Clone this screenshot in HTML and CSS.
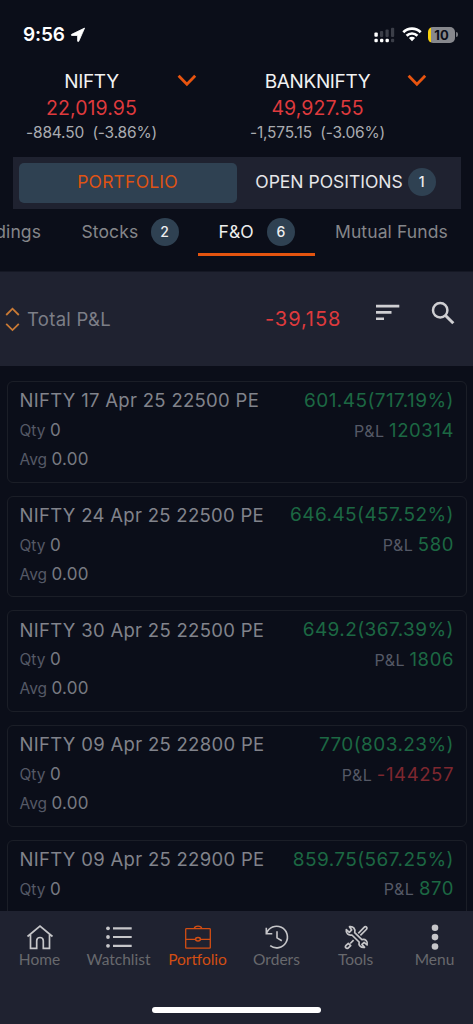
FILE: index.html
```html
<!DOCTYPE html>
<html lang="en">
<head>
<meta charset="utf-8">
<title>Portfolio</title>
<link rel="stylesheet" href="styles.css">
</head>
<body>
<div class="app">
  <header class="status">
    <div class="clock"><span>9:56</span>
      <svg width="16" height="16" viewBox="0 0 16 16"><path d="M14.6 1.1 8.8 14.2c-.3.6-1.2.5-1.2-.2V8.5H1.900c-.8 0-.9-.9-.2-1.200z" fill="#fff" stroke="#fff" stroke-width=".8" stroke-linejoin="round"/></svg>
    </div>
    <div class="signals">
      <svg width="21" height="16" viewBox="0 0 21 16">
        <g fill="#3b3e48"><rect x="6" y="4" width="3.200" height="6" rx="1"/><rect x="11.500" y="2.500" width="3.200" height="7.500" rx="1"/><rect x="17" y=".8" width="3.200" height="9.200" rx="1"/><rect x="17" y="11.700" width="3.200" height="3.600" rx="1"/></g>
        <g fill="#fff"><rect x=".4" y="5.400" width="3.400" height="4.400" rx="1"/><rect x=".4" y="11.700" width="3.400" height="3.600" rx="1.200"/><rect x="6" y="11.700" width="3.400" height="3.600" rx="1.200"/><rect x="11.500" y="11.700" width="3.400" height="3.600" rx="1.200"/></g>
      </svg>
      <svg class="wifi" width="20" height="15" viewBox="0 0 20 15" fill="none" stroke="#fff" stroke-width="2.700"><path d="M1.300 5.200a12.500 12.500 0 0 1 17.400 0"/><path d="M4.600 8.700a7.700 7.700 0 0 1 10.800 0"/><path d="M10 14.300 6.900 11.100a4.400 4.400 0 0 1 6.200 0z" fill="#fff" stroke="none"/></svg>
      <div class="battery">10</div><i class="battery-cap"></i>
    </div>
  </header>

  <section class="indices">
    <div class="index nifty">
      <b class="name">NIFTY</b><b class="price">22,019.95</b><span class="change">-884.50&nbsp; (-3.86%)</span>
    </div>
    <svg class="chevron" width="20" height="13" viewBox="0 0 20 13"><path d="m1.600 1.800 8.300 8.400 8.300-8.400" fill="none" stroke="#e8540f" stroke-width="2.800"/></svg>
    <div class="index bank">
      <b class="name">BANKNIFTY</b><b class="price">49,927.55</b><span class="change">-1,575.15&nbsp; (-3.06%)</span>
    </div>
    <svg class="chevron second" width="20" height="13" viewBox="0 0 20 13"><path d="m1.600 1.800 8.300 8.400 8.300-8.400" fill="none" stroke="#e8540f" stroke-width="2.800"/></svg>
  </section>

  <div class="switcher">
    <div class="segment active"><span>PORTFOLIO</span></div>
    <div class="segment"><span>OPEN POSITIONS</span><em class="badge">1</em></div>
  </div>

  <nav class="tabs">
    <div class="tab holdings"><span>dings</span></div>
    <div class="tab stocks"><span>Stocks</span><em class="badge">2</em></div>
    <div class="tab fno"><span>F&amp;O</span><em class="badge">6</em></div>
    <div class="tab funds"><span>Mutual Funds</span></div>
  </nav>

  <section class="summary">
    <svg class="sort" width="15" height="25" viewBox="0 0 15 25" fill="none" stroke="#c97a35" stroke-width="1.800"><path d="m1.200 8 6.300-6.300L13.800 8M1.200 16.800l6.300 6.300 6.300-6.300"/></svg>
    <span class="total-label">Total P&amp;L</span>
    <span class="total">-39,158</span>
    <svg class="filter" width="24" height="17" viewBox="0 0 24 17" fill="#cfcfd2"><path d="M0 .7h23.300v2.700H0zM0 7h15.500v2.700H0zM0 13.400h8v2.700H0z"/></svg>
    <svg class="search" width="24" height="24" viewBox="0 0 24 24" fill="none" stroke="#cfcfd2"><circle cx="9.200" cy="9.200" r="7.200" stroke-width="2.500"/><path d="m14 14 8.300 8.300" stroke-width="3"/></svg>
  </section>

  <main class="list">
    <article class="card">
      <div class="row"><h3>NIFTY 17 Apr 25 22500 PE</h3><span class="quote">601.45(717.19%)</span></div>
      <div class="row detail"><span><small>Qty</small> <strong>0</strong></span><span class="pl"><small>P&amp;L</small> <strong class="up">120314</strong></span></div>
      <div class="row detail"><span><small>Avg</small> <strong>0.00</strong></span></div>
    </article>
    <article class="card">
      <div class="row"><h3>NIFTY 24 Apr 25 22500 PE</h3><span class="quote">646.45(457.52%)</span></div>
      <div class="row detail"><span><small>Qty</small> <strong>0</strong></span><span class="pl"><small>P&amp;L</small> <strong class="up">580</strong></span></div>
      <div class="row detail"><span><small>Avg</small> <strong>0.00</strong></span></div>
    </article>
    <article class="card">
      <div class="row"><h3>NIFTY 30 Apr 25 22500 PE</h3><span class="quote">649.2(367.39%)</span></div>
      <div class="row detail"><span><small>Qty</small> <strong>0</strong></span><span class="pl"><small>P&amp;L</small> <strong class="up">1806</strong></span></div>
      <div class="row detail"><span><small>Avg</small> <strong>0.00</strong></span></div>
    </article>
    <article class="card">
      <div class="row"><h3>NIFTY 09 Apr 25 22800 PE</h3><span class="quote">770(803.23%)</span></div>
      <div class="row detail"><span><small>Qty</small> <strong>0</strong></span><span class="pl"><small>P&amp;L</small> <strong class="down">-144257</strong></span></div>
      <div class="row detail"><span><small>Avg</small> <strong>0.00</strong></span></div>
    </article>
    <article class="card">
      <div class="row"><h3>NIFTY 09 Apr 25 22900 PE</h3><span class="quote">859.75(567.25%)</span></div>
      <div class="row detail"><span><small>Qty</small> <strong>0</strong></span><span class="pl"><small>P&amp;L</small> <strong class="up">870</strong></span></div>
    </article>
  </main>

  <footer class="bottom">
    <div class="items">
      <div class="item"><svg width="28" height="28" viewBox="0 0 28 28" fill="none" stroke="#c6c6c9" stroke-width="1.700"><path d="M1.500 13.500 14 3.200l12.500 10.300M4.500 11.800v13.500h6.200v-7.500a3.300 3.300 0 0 1 6.600 0v7.500h6.200V11.800"/></svg><span>Home</span></div>
      <div class="item"><svg width="28" height="28" viewBox="0 0 28 28" fill="#c6c6c9"><circle cx="3" cy="5.300" r="1.900"/><circle cx="3" cy="14" r="1.900"/><circle cx="3" cy="22.800" r="1.900"/><path d="M8 4.200h18.700v2.200H8zM8 12.900h18.700v2.200H8zM8 21.700h18.700v2.200H8z"/></svg><span>Watchlist</span></div>
      <div class="item current"><svg width="28" height="28" viewBox="0 0 28 28" fill="none" stroke="#d24e13" stroke-width="1.300"><rect x="1.700" y="5.600" width="24.600" height="19.600" rx=".8"/><path d="M10.300 5.400c.5-3 6.900-3 7.400 0M1.700 16.300h9.500M16.800 16.300h9.500"/><ellipse cx="14" cy="16.300" rx="2.400" ry="1.700" stroke-width="1.500"/></svg><span>Portfolio</span></div>
      <div class="item"><svg width="28" height="28" viewBox="0 0 28 28" fill="none" stroke="#c6c6c9" stroke-width="1.600"><path d="M3.500 10.300A10.800 10.800 0 1 1 7.200 22.700M3.300 4.700v6h6M14 8.300v6.600l4.800 2.900"/></svg><span>Orders</span></div>
      <div class="item"><svg width="28" height="28" viewBox="0 0 28 28" fill="none" stroke="#c6c6c9" stroke-width="1.700" stroke-linejoin="round"><path d="m16.300 10.300 5.800-6c.8-.8 1.800-.8 2.400-.2s.6 1.600-.2 2.400L18.400 12.300M11.600 17.200l-3.400 3.300M4 25c-.8-.8-.7-1.800.1-2.700l2.200-2 2.400 2.300-2.100 2.100c-.9.9-1.900 1-2.600.3z"/><path d="M7.500 3.700c3.800-.6 6.300 2.300 5.200 5.900l7.200 7c3.400-1 6.300 1.700 5.200 5.300l-3-2.500-2.200 2 2.600 3c-3.700.6-6.200-2-5.400-5.400L9.900 12C6.400 12.700 3.600 10.300 4.300 6.600l3 2.700 2.400-2.400z"/></svg><span>Tools</span></div>
      <div class="item"><svg width="28" height="28" viewBox="0 0 28 28" fill="#c6c6c9"><circle cx="14" cy="4.700" r="3.300"/><circle cx="14" cy="14.100" r="3.300"/><circle cx="14" cy="23.500" r="3.300"/></svg><span>Menu</span></div>
    </div>
    <div class="home-bar"></div>
  </footer>
</div>
</body>
</html>
```
FILE: styles.css
```css
* { box-sizing: border-box; }
body { margin: 0; background: #0b0e19; font-family: Inter, "Liberation Sans", sans-serif; }
svg { display: block; flex: none; }
b, strong, h3, small, em { font-weight: 400; font-style: normal; }
.app { width: 473px; height: 1024px; overflow: hidden; display: flex; flex-direction: column; background: #0b0e19; white-space: nowrap; }

.status { height: 70px; flex: none; display: flex; justify-content: space-between; padding: 25px 15px 0 23px; }
.clock { display: flex; align-items: center; height: 20px; gap: 5px; color: #fff; font-size: 19px; font-weight: 600; letter-spacing: -.1px; }
.clock span { margin-top: -1px; }
.signals { display: flex; align-items: center; height: 20px; }
.wifi { margin: -1px 6px 0 7px; }
.battery { width: 27px; height: 16px; margin-top: -1px; border-radius: 5px; background: linear-gradient(90deg, #f8d00c 3px, #87888d 3px); color: #0b0e19; font-size: 13px; font-weight: 700; line-height: 16px; text-align: center; }
.battery-cap { width: 2px; height: 5px; margin: -1px 0 0 1px; border-radius: 0 2px 2px 0; background: #777980; }

.indices { height: 86.500px; flex: none; display: flex; align-items: flex-start; }
.index { display: flex; flex-direction: column; align-items: center; }
.nifty { width: 130px; margin-left: 26.500px; }
.bank { width: 140px; margin-left: 50.500px; }
.name { height: 24px; line-height: 24px; font-size: 19px; letter-spacing: -.35px; color: #f2f2f2; }
.price { height: 28px; line-height: 28px; font-size: 19.500px; letter-spacing: .1px; color: #df3a3d; }
.change { height: 20px; line-height: 21px; font-size: 15.500px; letter-spacing: -.18px; color: #a9abb0; }
.chevron { margin: 4px 0 0 20.500px; }
.chevron.second { margin-left: 19px; }

.switcher { width: 448px; height: 52.500px; flex: none; margin-left: 12.500px; padding: 6.500px 6px; display: flex; background: #1f2230; }
.segment { flex: 1; display: flex; align-items: center; justify-content: center; color: #e6e6e8; font-size: 17.500px; border-radius: 5px; }
.segment span { margin-top: -2px; }
.segment.active { flex: none; width: 218px; background: #2f4152; color: #df5314; letter-spacing: .2px; }
.badge { width: 28px; height: 28px; flex: none; border-radius: 50%; background: #2f4152; color: #eeeeef; font-size: 14px; font-weight: 500; line-height: 27px; text-align: center; letter-spacing: 0; }
.segment .badge { margin: -2px 0 0 5px; }

.tabs { height: 63px; flex: none; display: flex; border-bottom: 1px solid #151824; }
.tab { height: 47px; flex: none; display: flex; align-items: center; padding-bottom: 2px; font-size: 17.500px; letter-spacing: .1px; color: #85868a; }
.tab span { margin-top: -1px; }
.tab .badge { margin-left: auto; }
.holdings { width: 41px; justify-content: flex-end; }
.stocks { width: 97px; margin-left: 40.500px; }
.fno { width: 117px; margin-left: 19.500px; padding: 0 20px 2px 20.500px; color: #eee; background: linear-gradient(#e3540f, #e3540f) bottom / 100% 3px no-repeat; }
.funds { margin-left: 20px; }

.summary { height: 94px; flex: none; display: flex; align-items: flex-start; background: #1f2230; }
.sort { margin: 34.500px 0 0 5px; }
.total-label { margin: 35px 0 0 7px; line-height: 24px; font-size: 18.500px; letter-spacing: .3px; color: #7c7e87; }
.total { margin: 35px 0 0 auto; width: 76px; line-height: 24px; font-size: 20px; letter-spacing: .9px; color: #df3a3d; }
.filter { margin: 32px 0 0 35px; }
.search { margin: 29px 18px 0 31px; }

.list { flex: 1; min-height: 0; overflow: hidden; padding: 15px 6.500px 0 7px; display: flex; flex-direction: column; gap: 13.200px; }
.card { height: 101.500px; flex: none; padding: 3px 12px 0 11.500px; border: 1px solid #1b1e27; border-radius: 6px; }
.row { display: flex; justify-content: space-between; align-items: center; height: 29px; }
.row:first-child { height: 30.500px; }
h3 { margin: 0; font-size: 18.500px; letter-spacing: .3px; color: #81838b; }
.quote { margin-right: -.4px; font-size: 19px; letter-spacing: .42px; color: #1c6843; }
small { font-size: 15.500px; color: #555966; }
strong { font-size: 17px; letter-spacing: .2px; color: #777981; }
.pl { margin: -1px -.5px 0 0; }
.pl small { font-size: 16px; letter-spacing: .5px; }
.pl strong { font-size: 18.500px; letter-spacing: .6px; }
strong.up { color: #1c6843; }
strong.down { color: #7d272f; }

.bottom { height: 113.500px; flex: none; display: flex; flex-direction: column; background: #1f2230; }
.items { display: flex; padding-top: 12px; }
.item { width: 79px; flex: none; display: flex; flex-direction: column; align-items: center; color: #68696d; font: 15.500px/17px Lato, sans-serif; }
.item.current { color: #d24e13; }
.home-bar { width: 169px; height: 6px; margin: 39.500px auto 0; border-radius: 3px; background: #fff; }
```
